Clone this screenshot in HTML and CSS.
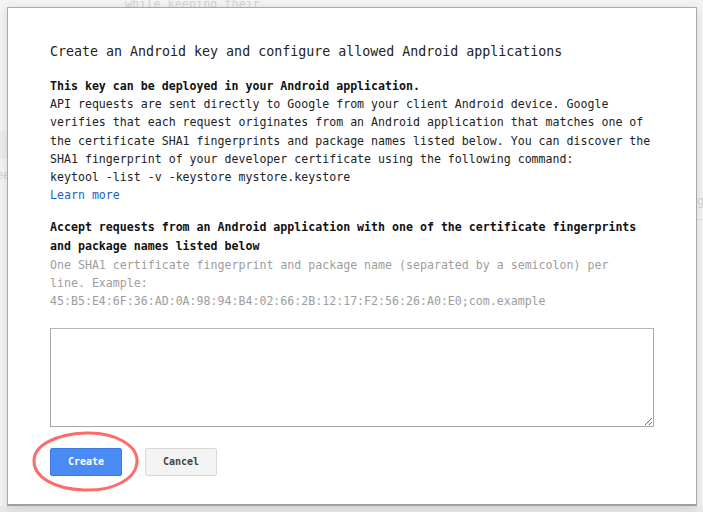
FILE: index.html
```html
<!DOCTYPE html>
<html>
<head>
<meta charset="utf-8">
<link rel="stylesheet" href="styles.css">
</head>
<body>
<div class="backdrop">
  <span class="ghost ghost-top">while keeping their</span>
  <span class="ghost ghost-left">ee</span>
  <span class="ghost ghost-right">g</span>
  <div class="ghost-band ghost-band-left"></div>
  <div class="ghost-rule ghost-rule-right"></div>
</div>
<div class="dialog">
  <h1 class="title">Create an Android key and configure allowed Android applications</h1>
  <div class="desc">
    <p class="strong">This key can be deployed in your Android application.</p>
    <p>API requests are sent directly to Google from your client Android device. Google verifies that each request originates from an Android application that matches one of the certificate SHA1 fingerprints and package names listed below. You can discover the SHA1 fingerprint of your developer certificate using the following command:</p>
    <p>keytool -list -v -keystore mystore.keystore</p>
    <a class="link" href="#">Learn more</a>
  </div>
  <label class="label" for="fp">Accept requests from an Android application with one of the certificate fingerprints and package names listed below</label>
  <p class="hint">One SHA1 certificate fingerprint and package name (separated by a semicolon) per<br>line. Example:<br>45:B5:E4:6F:36:AD:0A:98:94:B4:02:66:2B:12:17:F2:56:26:A0:E0;com.example</p>
  <textarea id="fp" class="field"></textarea>
  <div class="actions">
    <button class="btn btn-primary">Create</button>
    <button class="btn btn-default">Cancel</button>
  </div>
</div>
<svg class="annotation" width="112" height="66" viewBox="0 0 112 66">
  <path d="M56 4 C 84 3, 108 16, 107 33 C 106 50, 84 62, 54 61 C 24 60, 4 48, 4 32 C 4 16, 26 5, 56 4 Z" fill="none" stroke="#ff6b6b" stroke-width="3"/>
</svg>
</body>
</html>
```

FILE: styles.css
```css
html, body {
  margin: 0;
  padding: 0;
}
body {
  width: 703px;
  height: 512px;
  overflow: hidden;
  background: #f3f3f3;
  font-family: "DejaVu Sans Mono", "Liberation Mono", monospace;
  position: relative;
}
.backdrop {
  position: absolute;
  inset: 0;
  background: #f4f4f4;
}
.backdrop::after {
  content: "";
  position: absolute;
  left: 0;
  right: 0;
  top: 506px;
  height: 6px;
  background: #e9e9e9;
}
.ghost {
  position: absolute;
  font-size: 11.8px;
  color: #d4d4d4;
  line-height: 14px;
}
.ghost-top { left: 125px; top: -3px; }
.ghost-left { left: -4px; top: 168px; }
.ghost-right { left: 697px; top: 194px; }
.ghost-band {
  position: absolute;
}
.ghost-band-left {
  left: 0;
  width: 7px;
  top: 131px;
  height: 28px;
  background: #ececec;
}
.ghost-rule-right {
  position: absolute;
  left: 697px;
  right: 0;
  top: 219px;
  height: 1px;
  background: #e2e2e2;
}
.dialog {
  position: relative;
  box-sizing: border-box;
  margin: 7px 0 0 7px;
  width: 690px;
  height: 499px;
  background: #fff;
  border: 1px solid #a9a9a9;
  border-bottom: 2px solid #a0a0a0;
  box-shadow: 0 2px 10px rgba(0, 0, 0, 0.12);
  padding: 35px 0 0 42px;
  color: #222;
}
.title {
  margin: 0;
  font-size: 13.3px;
  font-weight: normal;
  line-height: 18px;
  color: #222;
}
.desc {
  margin-top: 16px;
  width: 604px;
  font-size: 11.6px;
  line-height: 18.2px;
}
.desc p {
  margin: 0;
}
.strong {
  font-weight: bold;
  color: #111;
}
.link {
  color: #1a5fcc;
  text-decoration: none;
}
.label {
  display: block;
  margin-top: 14px;
  width: 604px;
  font-size: 11.6px;
  line-height: 18.2px;
  font-weight: bold;
  color: #111;
}
.hint {
  margin: 1px 0 0;
  font-size: 11.6px;
  line-height: 18.2px;
  color: #9d9d9d;
}
.field {
  display: block;
  box-sizing: border-box;
  margin-top: 18px;
  width: 604px;
  height: 99px;
  border: 1px solid #a8a8a8;
  border-top-color: #b9b9b9;
  padding: 4px;
  font-family: inherit;
  font-size: 11.6px;
  background: #fff;
  outline: none;
}
.actions {
  display: flex;
  gap: 23px;
  margin-top: 21px;
}
.btn {
  box-sizing: border-box;
  width: 72px;
  height: 28px;
  font-family: "DejaVu Sans Mono", monospace;
  font-size: 10px;
  font-weight: bold;
  border-radius: 2px;
  padding: 0 0 1px;
  cursor: pointer;
}
.btn-primary {
  background: #4a8af4;
  border: 1px solid #3b7be6;
  color: #fff;
}
.btn-default {
  background: #f3f3f3;
  border: 1px solid #d9d9d9;
  color: #444;
}
.annotation {
  position: absolute;
  left: 30px;
  top: 429px;
}
```
